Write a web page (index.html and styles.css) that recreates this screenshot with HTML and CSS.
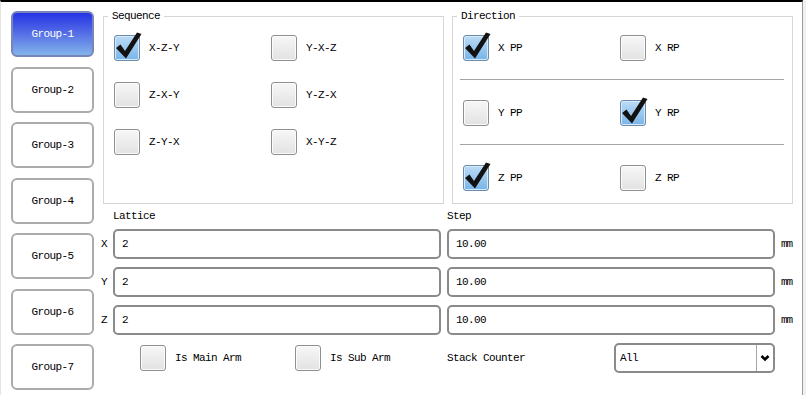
FILE: index.html
```html
<!DOCTYPE html>
<html lang="en">
<head>
    <meta charset="UTF-8">
    <title>Stack Settings</title>
    <link rel="stylesheet" href="styles.css">
</head>
<body>

    <div class="window">
        <div class="groups">
            <button class="group active">Group-1</button>
            <button class="group">Group-2</button>
            <button class="group">Group-3</button>
            <button class="group">Group-4</button>
            <button class="group">Group-5</button>
            <button class="group">Group-6</button>
            <button class="group">Group-7</button>
        </div>

        <div class="content">
            <div class="panels">
                <fieldset class="panel">
                    <legend>Sequence</legend>
                    <div class="seq-grid">
                        <label class="check"><span class="box checked"><svg viewBox="0 0 26 26"><polygon points="2,13 6.5,9.5 11,16 23,-2.5 27.5,-1 12,23.5"/></svg></span>X-Z-Y</label>
                        <label class="check"><span class="box"></span>Y-X-Z</label>
                        <label class="check"><span class="box"></span>Z-X-Y</label>
                        <label class="check"><span class="box"></span>Y-Z-X</label>
                        <label class="check"><span class="box"></span>Z-Y-X</label>
                        <label class="check"><span class="box"></span>X-Y-Z</label>
                    </div>
                </fieldset>

                <fieldset class="panel">
                    <legend>Direction</legend>
                    <div class="dir-row first">
                        <label class="check"><span class="box checked"><svg viewBox="0 0 26 26"><polygon points="2,13 6.5,9.5 11,16 23,-2.5 27.5,-1 12,23.5"/></svg></span>X PP</label>
                        <label class="check"><span class="box"></span>X RP</label>
                    </div>
                    <div class="dir-row">
                        <label class="check"><span class="box"></span>Y PP</label>
                        <label class="check"><span class="box checked"><svg viewBox="0 0 26 26"><polygon points="2,13 6.5,9.5 11,16 23,-2.5 27.5,-1 12,23.5"/></svg></span>Y RP</label>
                    </div>
                    <div class="dir-row last">
                        <label class="check"><span class="box checked"><svg viewBox="0 0 26 26"><polygon points="2,13 6.5,9.5 11,16 23,-2.5 27.5,-1 12,23.5"/></svg></span>Z PP</label>
                        <label class="check"><span class="box"></span>Z RP</label>
                    </div>
                </fieldset>
            </div>

            <div class="params">
                <span></span>
                <span class="head">Lattice</span>
                <span class="head">Step</span>
                <span></span>

                <span class="axis">X</span>
                <input class="field" type="text" value="2">
                <input class="field" type="text" value="10.00">
                <span class="unit">mm</span>

                <span class="axis">Y</span>
                <input class="field" type="text" value="2">
                <input class="field" type="text" value="10.00">
                <span class="unit">mm</span>

                <span class="axis">Z</span>
                <input class="field" type="text" value="2">
                <input class="field" type="text" value="10.00">
                <span class="unit">mm</span>

                <span></span>
                <div class="arms">
                    <label class="check arm"><span class="box"></span>Is Main Arm</label>
                    <label class="check"><span class="box"></span>Is Sub Arm</label>
                </div>
                <div class="counter">
                    <span>Stack Counter</span>
                    <div class="select">
                        <span class="select-value">All</span>
                        <span class="select-arrow"><svg viewBox="0 0 10 8"><polyline points="1.5,2 5,5.5 8.5,2"/></svg></span>
                    </div>
                </div>
                <span></span>
            </div>
        </div>
    </div>

</body>
</html>
```

FILE: styles.css
```css
body {
    margin: 0;
    background-color: #f0f0f0;
    font-family: "Liberation Mono", monospace;
    font-size: 11px;
    letter-spacing: -0.6px;
    color: #000;
}

.window {
    display: flex;
    gap: 9px;
    width: 803px;
    height: 395px;
    box-sizing: border-box;
    background-color: #fff;
    border-top: 2px solid #000;
    border-right: 1px solid #9c9c9c;
    border-left: 1px solid #e4e4e4;
}

/* left column of group buttons */
.groups {
    display: flex;
    flex-direction: column;
    gap: 9.5px;
    padding: 9px 0 0 10px;
}

.group {
    width: 83px;
    height: 46px;
    background-color: #fff;
    border: 2px solid #ababab;
    border-radius: 6px;
    font-family: inherit;
    font-size: 11px;
    letter-spacing: -0.6px;
    color: #000;
    padding: 0;
}

.group.active {
    background: linear-gradient(#2633e6, #5670e6 50%, #82b4ea);
    border-color: #7885b8;
    color: #fff;
}

.content {
    width: 690px;
    padding-top: 8px;
}

.panels {
    display: flex;
    gap: 8px;
}

.panel {
    width: 341px;
    height: 194px;
    box-sizing: border-box;
    margin: 0;
    padding: 13px 8px 0 10px;
    border: 1px solid #d6d6d6;
    min-width: 0;
}

.panel legend {
    padding: 0 4px;
    margin-left: -6px;
    line-height: 12px;
}

.seq-grid {
    display: grid;
    grid-template-columns: 157px 157px;
    row-gap: 21px;
}

.check {
    display: flex;
    align-items: center;
    gap: 9px;
    height: 26px;
    flex: none;
}

.box {
    position: relative;
    width: 26px;
    height: 26px;
    box-sizing: border-box;
    border: 1px solid #8f9090;
    border-radius: 3px;
    background: linear-gradient(#f7f7f7, #e2e2e2);
    box-shadow: inset 0 0 0 1px #fbfbfb;
}

.box.checked {
    border-color: #6d8aa8;
    background: linear-gradient(#bcdcf6, #78b4e8);
    box-shadow: inset 0 0 0 1px #d6ebfa;
}

.box svg {
    position: absolute;
    left: -1px;
    top: -1px;
    width: 26px;
    height: 26px;
    overflow: visible;
    fill: #121212;
}

.dir-row {
    display: grid;
    grid-template-columns: 157px 157px;
    padding: 20px 0 18px;
    margin-left: -3px;
    padding-left: 3px;
    border-bottom: 1px solid #a4a4a4;
}

.dir-row.first {
    padding-top: 0;
}

.dir-row.last {
    padding-bottom: 0;
    border-bottom: none;
}

/* lattice / step block */
.params {
    display: grid;
    grid-template-columns: 6px 328px 328px auto;
    grid-template-rows: 10px 30px 30px 30px 30px;
    column-gap: 6px;
    row-gap: 8px;
    margin: 7px 0 0 -2px;
    align-items: center;
}

.head {
    line-height: 10px;
}

.field {
    height: 30px;
    box-sizing: border-box;
    border: 2px solid #8a8a8a;
    border-radius: 5px;
    padding: 0 7px;
    font-family: inherit;
    font-size: 11px;
    letter-spacing: -0.6px;
    color: #000;
    background-color: #fff;
}

.unit {
    font-size: 11px;
    letter-spacing: -1px;
}

.arms {
    display: flex;
    padding-left: 27px;
}

.arm {
    width: 155px;
}

.counter {
    display: flex;
    justify-content: space-between;
    align-items: center;
}

.select {
    display: flex;
    width: 161px;
    height: 30px;
    box-sizing: border-box;
    border: 2px solid #8a8a8a;
    border-radius: 5px;
    background-color: #fff;
}

.select-value {
    flex: 1;
    padding-left: 4px;
    line-height: 26px;
}

.select-arrow {
    width: 16px;
    border-left: 1px solid #a8a8a8;
    display: flex;
    align-items: center;
    justify-content: center;
}

.select-arrow svg {
    width: 10px;
    height: 8px;
    fill: none;
    stroke: #000;
    stroke-width: 2.6;
}
```
